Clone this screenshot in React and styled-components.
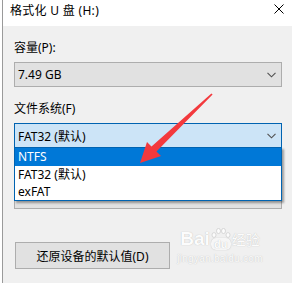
import React from "react";
import styled, { createGlobalStyle } from "styled-components";

const Global = createGlobalStyle`
  html, body { margin: 0; padding: 0; background: #ffffff; }
  body { width: 292px; height: 283px; overflow: hidden; position: relative;
    font-family: "Noto Sans", "Noto Sans CJK SC", sans-serif; font-size: 12px; color: #000; }
`;

const Page = styled.div`
  position: relative;
  width: 292px;
  height: 283px;
  overflow: hidden;
  background: #ffffff;
`;

const Window = styled.div`
  margin-left: 2px;
  height: 283px;
  border-left: 1px solid #9a9a9a;
  display: flex;
  flex-direction: column;
  background: #f0f0f0;
`;

const TitleBar = styled.div`
  height: 26px;
  flex: none;
  background: #ffffff;
  display: flex;
  align-items: flex-start;
  justify-content: space-between;
  padding: 2px 8px 0 7px;
  box-sizing: border-box;
`;

const Title = styled.div`
  font-size: 12px;
  line-height: 17px;
  letter-spacing: 0.3px;
`;

const Close = styled.svg`
  width: 10px;
  height: 10px;
  margin-top: 2px;
`;

const Content = styled.div`
  display: flex;
  flex-direction: column;
  padding: 14px 10px 0 11px;
`;

const Label = styled.div`
  height: 16px;
  line-height: 16px;
  margin-top: ${(p) => p.$mt || 0}px;
`;

const FieldWrap = styled.div`
  position: relative;
  margin-top: 6px;
`;

const Combo = styled.div`
  height: 25px;
  box-sizing: border-box;
  border: 1px solid ${(p) => (p.$active ? "#0063b1" : "#adadad")};
  background: ${(p) => (p.$active ? "#cce4f7" : "#e1e1e1")};
  display: flex;
  align-items: center;
  justify-content: space-between;
  padding: 0 5px 0 3px;
`;

const Chevron = styled.svg`
  width: 9px;
  height: 6px;
`;

const List = styled.div`
  position: absolute;
  top: 24px;
  left: 0;
  right: 0;
  z-index: 2;
  border: 1px solid #0063b1;
  background: #ffffff;
  box-shadow: 2px 2px 2px rgba(0, 0, 0, 0.35);
  display: flex;
  flex-direction: column;
`;

const Item = styled.div`
  height: ${(p) => p.$h}px;
  line-height: ${(p) => p.$h}px;
  padding-left: 3px;
  background: ${(p) => (p.$sel ? "#0078d7" : "#ffffff")};
  color: ${(p) => (p.$sel ? "#ffffff" : "#000000")};
`;

const Button = styled.div`
  margin-top: 33px;
  margin-left: 1px;
  width: 155px;
  height: 27px;
  box-sizing: border-box;
  border: 1px solid #adadad;
  background: #e1e1e1;
  display: flex;
  align-items: center;
  justify-content: center;
`;

const Watermark = styled.div`
  position: absolute;
  left: 174px;
  top: 228px;
  width: 92px;
  display: flex;
  flex-direction: column;
  align-items: center;
  color: #fcfcfc;
  pointer-events: none;
`;

const WmTop = styled.div`
  display: flex;
  align-items: flex-end;
  font-family: "Liberation Sans", "Noto Sans CJK SC", sans-serif;
  font-weight: bold;
  text-shadow: 0 0 1px rgba(140, 140, 140, 0.6);
`;

const WmBai = styled.span`
  font-size: 19px;
  line-height: 22px;
`;

const WmPaw = styled.div`
  display: flex;
  flex-direction: column;
  align-items: center;
  margin: 0 1px;
`;

const WmDu = styled.span`
  font-size: 11px;
  line-height: 12px;
  background: #f6f6f6;
  border-radius: 5px;
  padding: 0 3px;
  box-shadow: 0 0 1px rgba(140, 140, 140, 0.6);
`;

const WmCn = styled.span`
  font-size: 14px;
  line-height: 20px;
  font-weight: normal;
`;

const WmSub = styled.div`
  font-family: "Liberation Sans", sans-serif;
  font-size: 10px;
  line-height: 12px;
  margin-top: 3px;
  letter-spacing: 0.3px;
  text-shadow: 0 0 1px rgba(140, 140, 140, 0.6);
`;

const Arrow = styled.svg`
  position: absolute;
  left: 0;
  top: 0;
  width: 292px;
  height: 283px;
  z-index: 5;
  pointer-events: none;
`;

const ChevronIcon = () => (
  <Chevron viewBox="0 0 9 6">
    <path d="M0.5 0.8 L4.5 4.8 L8.5 0.8" fill="none" stroke="#505050" strokeWidth="1.1" />
  </Chevron>
);

export default function App() {
  return (
    <Page>
      <Global />
      <Window>
        <TitleBar>
          <Title>格式化 U 盘 (H:)</Title>
          <Close viewBox="0 0 10 10">
            <path d="M0.5 0.5 L9.5 9.5 M9.5 0.5 L0.5 9.5" stroke="#000" strokeWidth="1" />
          </Close>
        </TitleBar>
        <Content>
          <Label>容量(P):</Label>
          <FieldWrap>
            <Combo>
              <span>7.49 GB</span>
              <ChevronIcon />
            </Combo>
          </FieldWrap>
          <Label $mt={14}>文件系统(F)</Label>
          <FieldWrap>
            <Combo $active>
              <span>FAT32 (默认)</span>
              <ChevronIcon />
            </Combo>
            <List>
              <Item $sel $h={18}>NTFS</Item>
              <Item $h={17}>FAT32 (默认)</Item>
              <Item $h={17}>exFAT</Item>
            </List>
          </FieldWrap>
          <Label $mt={14} />
          <FieldWrap>
            <Combo>
              <span />
              <ChevronIcon />
            </Combo>
          </FieldWrap>
          <Button>还原设备的默认值(D)</Button>
        </Content>
      </Window>
      <Watermark>
        <WmTop>
          <WmBai>Bai</WmBai>
          <WmPaw>
            <svg width="20" height="10" viewBox="0 0 20 10">
              <g fill="#fcfcfc" stroke="#c4c4c4" strokeWidth="0.6">
                <ellipse cx="3" cy="7" rx="2" ry="2.4" />
                <ellipse cx="7.5" cy="3" rx="2" ry="2.6" />
                <ellipse cx="12.5" cy="3" rx="2" ry="2.6" />
                <ellipse cx="17" cy="7" rx="2" ry="2.4" />
              </g>
            </svg>
            <WmDu>du</WmDu>
          </WmPaw>
          <WmCn>经验</WmCn>
        </WmTop>
        <WmSub>jingyan.baidu.com</WmSub>
      </Watermark>
      <Arrow viewBox="0 0 292 283">
        <polygon
          points="212,94 212.6,94.6 156.5,151.5 161,156 140,163 147,142 151.5,146.5 211.4,93.4"
          fill="#f3393d"
        />
      </Arrow>
    </Page>
  );
}
